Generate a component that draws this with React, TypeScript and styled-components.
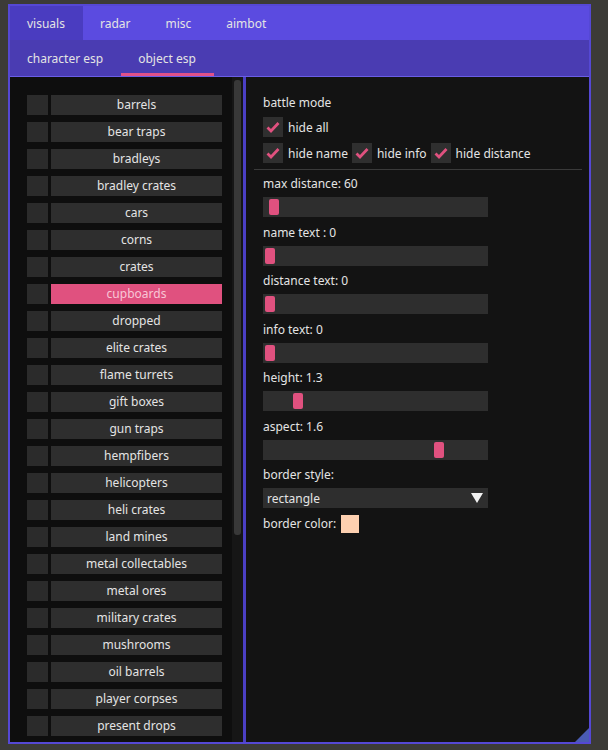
import React from "react";
import styled, { createGlobalStyle } from "styled-components";

const GlobalStyle = createGlobalStyle`
    body {
        margin: 0;
        background: #3c3b37;
        font-family: "Noto Sans", "Open Sans", sans-serif;
        font-size: 12px;
        color: #e4e4e4;
    }
`

const Window = styled.div`
    position: relative;
    box-sizing: border-box;
    width: 583px;
    height: 740px;
    margin: 4px 0 0 8px;
    border: 2px solid #5548d4;
    background: #121212;
    display: flex;
    flex-direction: column;
    overflow: hidden;

    &::after {
        content: "";
        position: absolute;
        right: 0;
        bottom: 0;
        border-style: solid;
        border-width: 0 0 14px 14px;
        border-color: transparent transparent #4a5cb3 transparent;
    }
`

const TabBar = styled.div`
    display: flex;
    height: 34px;
    background: #5b4be0;
`

const Tab = styled.div<{ $active?: boolean }>`
    display: flex;
    align-items: center;
    padding: 0 18px 0 17px;
    background: ${p => p.$active ? "#4a3cc0" : "transparent"};
`

const SubTabBar = styled.div`
    display: flex;
    height: 36px;
    background: #4a3cb2;
    border-bottom: 1px solid #6a5de6;
`

const SubTab = styled.div<{ $active?: boolean }>`
    display: flex;
    align-items: center;
    padding: 0 18px 0 17px;
    box-shadow: ${p => p.$active ? "inset 0 -3px 0 #e0518a" : "none"};
`

const Body = styled.div`
    flex: 1;
    display: grid;
    grid-template-columns: 233px 3px 1fr;
    min-height: 0;
`

const ListPanel = styled.div`
    display: flex;
    background: #0e0e0e;
    overflow: hidden;
`

const List = styled.div`
    flex: 1;
    display: flex;
    flex-direction: column;
    gap: 7px;
    padding: 18px 10px 0 17px;
`

const Row = styled.div`
    display: flex;
    gap: 3px;
    flex-shrink: 0;
`

const RowBox = styled.div`
    width: 21px;
    height: 20px;
    background: #2b2b2b;
`

const RowLabel = styled.div<{ $selected?: boolean }>`
    flex: 1;
    height: 20px;
    line-height: 20px;
    text-align: center;
    background: ${p => p.$selected ? "#e0517f" : "#2e2e2e"};
    color: ${p => p.$selected ? "#f8c6d6" : "#e4e4e4"};
`

const ScrollTrack = styled.div`
    width: 11px;
    padding: 3px 2px;
    box-sizing: border-box;
    background: #161616;
`

const ScrollGrab = styled.div`
    height: 455px;
    border-radius: 3px;
    background: #383838;
`

const Divider = styled.div`
    background: #4b3fc4;
`

const SettingsPanel = styled.div`
    display: flex;
    flex-direction: column;
    padding: 17px 7px 0 17px;
    background: #131313;
`

const Label = styled.div`
    line-height: 17px;
`

const CheckRow = styled.div`
    display: flex;
    align-items: center;
    gap: 4px;
    margin-top: 6px;
`

const Check = styled.div`
    display: flex;
    align-items: center;
    gap: 5px;
`

const CheckBox = styled.div`
    width: 20px;
    height: 20px;
    background: #2f2f2f;
    display: flex;
    align-items: center;
    justify-content: center;
`

const Separator = styled.div`
    height: 1px;
    margin: 6px 0 5px -9px;
    background: #3a3a3a;
`

const Field = styled.div`
    display: flex;
    flex-direction: column;
    gap: 5px;
    margin-bottom: 6.5px;
`

const SliderTrack = styled.div`
    position: relative;
    width: 225px;
    height: 20px;
    background: #2e2e2e;
`

const SliderGrab = styled.div`
    position: absolute;
    top: 2px;
    width: 10px;
    height: 16px;
    border-radius: 2px;
    background: #e0517f;
`

const Combo = styled.div`
    display: flex;
    align-items: center;
    justify-content: space-between;
    width: 225px;
    height: 20px;
    padding: 0 5px 0 4px;
    box-sizing: border-box;
    background: #2e2e2e;
`

const ComboArrow = styled.span`
    width: 0;
    height: 0;
    border-left: 6px solid transparent;
    border-right: 6px solid transparent;
    border-top: 10px solid #f2f2f2;
`

const ColorRow = styled.div`
    display: flex;
    align-items: center;
    gap: 5px;
`

const Swatch = styled.div<{ $color: string }>`
    width: 18px;
    height: 18px;
    background: ${p => p.$color};
`

const objects = [
    "barrels", "bear traps", "bradleys", "bradley crates", "cars", "corns",
    "crates", "cupboards", "dropped", "elite crates", "flame turrets",
    "gift boxes", "gun traps", "hempfibers", "helicopters", "heli crates",
    "land mines", "metal collectables", "metal ores", "military crates",
    "mushrooms", "oil barrels", "player corpses", "present drops",
];

// position of each slider grab as a fraction of the track
const sliders = [
    { label: "max distance: 60", pos: 0.019 },
    { label: "name text : 0", pos: 0 },
    { label: "distance text: 0", pos: 0 },
    { label: "info text: 0", pos: 0 },
    { label: "height: 1.3", pos: 0.135 },
    { label: "aspect: 1.6", pos: 0.8 },
];

const Tick = () => (
    <svg width="16" height="16" viewBox="0 0 16 16">
        <polyline points="2.5,8.5 6,12 13.5,4" fill="none" stroke="#e0517f" strokeWidth="2.8" />
    </svg>
)

const CheckItem = ({ text }: { text: string }) => (
    <Check>
        <CheckBox><Tick /></CheckBox>
        <span>{text}</span>
    </Check>
)

const App = () => {
    const selected = "cupboards";

    return (
        <>
            <GlobalStyle />
            <Window>
                <TabBar>
                    <Tab $active>visuals</Tab>
                    <Tab>radar</Tab>
                    <Tab>misc</Tab>
                    <Tab>aimbot</Tab>
                </TabBar>
                <SubTabBar>
                    <SubTab>character esp</SubTab>
                    <SubTab $active>object esp</SubTab>
                </SubTabBar>
                <Body>
                    <ListPanel>
                        <List>
                            {objects.map(name => (
                                <Row key={name}>
                                    <RowBox />
                                    <RowLabel $selected={name === selected}>{name}</RowLabel>
                                </Row>
                            ))}
                        </List>
                        <ScrollTrack>
                            <ScrollGrab />
                        </ScrollTrack>
                    </ListPanel>
                    <Divider />
                    <SettingsPanel>
                        <Label>battle mode</Label>
                        <CheckRow>
                            <CheckItem text="hide all" />
                        </CheckRow>
                        <CheckRow>
                            <CheckItem text="hide name" />
                            <CheckItem text="hide info" />
                            <CheckItem text="hide distance" />
                        </CheckRow>
                        <Separator />
                        {sliders.map(s => (
                            <Field key={s.label}>
                                <Label>{s.label}</Label>
                                <SliderTrack>
                                    <SliderGrab style={{ left: 2 + s.pos * 211 }} />
                                </SliderTrack>
                            </Field>
                        ))}
                        <Field>
                            <Label>border style:</Label>
                            <Combo>
                                <span>rectangle</span>
                                <ComboArrow />
                            </Combo>
                        </Field>
                        <ColorRow>
                            <span>border color:</span>
                            <Swatch $color="#fdd0b0" />
                        </ColorRow>
                    </SettingsPanel>
                </Body>
            </Window>
        </>
    )
};

export default App;
